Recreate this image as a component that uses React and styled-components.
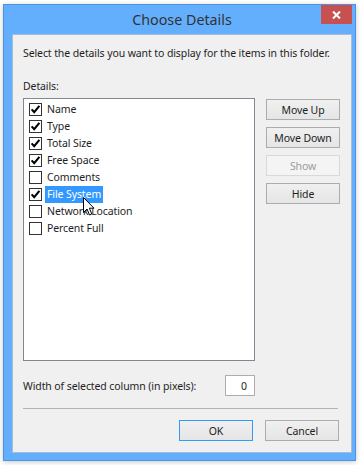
import React from "react";
import styled, { createGlobalStyle } from "styled-components";

const Global = createGlobalStyle`
  html, body { margin: 0; padding: 0; background: #ffffff; }
  body { font-family: "Noto Sans", "Open Sans", sans-serif; }
`;

const Page = styled.div`
  width: 364px;
  height: 465px;
  box-sizing: border-box;
  padding: 4px 0 0 3px;
  overflow: hidden;
`;

const Window = styled.div`
  width: 353px;
  height: 457px;
  box-sizing: border-box;
  border: 1px solid #4d94e0;
  background: #63affd;
  padding: 0 3px 7px 8px;
  display: flex;
  flex-direction: column;
  box-shadow: 0 1px 5px rgba(0, 0, 0, 0.22);
`;

const TitleBar = styled.div`
  position: relative;
  height: 29px;
  display: flex;
  align-items: center;
  justify-content: center;
  font-size: 14.3px;
  color: #333333;
`;

const CloseButton = styled.div`
  position: absolute;
  top: 0;
  right: 0;
  width: 31px;
  height: 19px;
  background: #c75050;
  display: flex;
  align-items: center;
  justify-content: center;
`;

const Client = styled.div`
  flex: 1;
  box-sizing: border-box;
  background: #f0f0f0;
  border: 1px solid #a7bdd6;
  padding: 11px 11px 11px 10px;
  display: flex;
  flex-direction: column;
  font-size: 10.5px;
  letter-spacing: -0.1px;
  color: #1e1e1e;
`;

const Text = styled.div`
  line-height: 15px;
  margin-top: ${(p) => p.$mt || 0}px;
`;

const MainRow = styled.div`
  display: flex;
  gap: 11px;
  margin-top: 4px;
`;

const ListBox = styled.div`
  position: relative;
  width: 233px;
  height: 263px;
  box-sizing: border-box;
  border: 1px solid #828790;
  background: #ffffff;
  padding: 2px 0 0 5px;
  display: flex;
  flex-direction: column;
`;

const Row = styled.div`
  height: 17px;
  display: flex;
  align-items: center;
`;

const Box = styled.div`
  width: 13px;
  height: 13px;
  box-sizing: border-box;
  border: 1px solid #333333;
  background: #ffffff;
  margin-right: 3px;
  display: flex;
  align-items: center;
  justify-content: center;
`;

const Label = styled.span`
  height: 17px;
  line-height: 17px;
  padding: 0 2px;
  background: ${(p) => (p.$selected ? "#3399ff" : "transparent")};
  color: ${(p) => (p.$selected ? "#ffffff" : "#1e1e1e")};
`;

const Cursor = styled.svg`
  position: absolute;
  left: 59px;
  top: 98px;
`;

const ButtonColumn = styled.div`
  display: flex;
  flex-direction: column;
  gap: 7px;
  padding-top: 1px;
`;

const Button = styled.div`
  width: 74px;
  height: 21px;
  box-sizing: border-box;
  border: 1px solid ${(p) => (p.$disabled ? "#d9d9d9" : p.$default ? "#3399ff" : "#acacac")};
  background: ${(p) => (p.$disabled ? "#f4f4f4" : "linear-gradient(#f0f0f0, #e5e5e5)")};
  color: ${(p) => (p.$disabled ? "#9b9b9b" : "#1e1e1e")};
  display: flex;
  align-items: center;
  justify-content: center;
`;

const WidthRow = styled.div`
  width: 233px;
  display: flex;
  align-items: center;
  justify-content: space-between;
  margin-top: 14px;
`;

const NumInput = styled.div`
  width: 30px;
  height: 21px;
  box-sizing: border-box;
  border: 1px solid #abadb3;
  background: #ffffff;
  display: flex;
  align-items: center;
  justify-content: flex-end;
  padding-right: 7px;
  margin-right: 1px;
`;

const Separator = styled.div`
  width: 315px;
  height: 1px;
  background: #b4b4b4;
  margin-top: 12px;
`;

const Footer = styled.div`
  display: flex;
  justify-content: flex-end;
  gap: 12px;
  margin-top: 11px;
  padding-right: 1px;
`;

const items = [
  ["Name", true],
  ["Type", true],
  ["Total Size", true],
  ["Free Space", true],
  ["Comments", false],
  ["File System", true, true],
  ["Network Location", false],
  ["Percent Full", false],
];

const Check = () => (
  <svg width="11" height="11" viewBox="0 0 11 11">
    <path d="M1.6 5.4 L4.2 8.2 L9.4 1.8" fill="none" stroke="#000" strokeWidth="2.1" strokeLinejoin="miter" />
  </svg>
);

export default function App() {
  return (
    <Page>
      <Global />
      <Window>
        <TitleBar>
          Choose Details
          <CloseButton>
            <svg width="9" height="8" viewBox="0 0 9 8">
              <path d="M1 0.5 L8 7.5 M8 0.5 L1 7.5" stroke="#fff" strokeWidth="2" />
            </svg>
          </CloseButton>
        </TitleBar>
        <Client>
          <Text>Select the details you want to display for the items in this folder.</Text>
          <Text $mt={18}>Details:</Text>
          <MainRow>
            <ListBox>
              {items.map(([name, checked, selected]) => (
                <Row key={name}>
                  <Box>{checked && <Check />}</Box>
                  <Label $selected={selected}>{name}</Label>
                </Row>
              ))}
              <Cursor width="13" height="20" viewBox="0 0 13 20">
                <path
                  d="M0.5 0.5 L0.5 15.5 L4 12 L6.5 18 L8.8 17 L6.4 11.2 L11 11.2 Z"
                  fill="#ffffff"
                  stroke="#000000"
                  strokeWidth="1"
                  strokeLinejoin="round"
                />
              </Cursor>
            </ListBox>
            <ButtonColumn>
              <Button>Move Up</Button>
              <Button>Move Down</Button>
              <Button $disabled>Show</Button>
              <Button>Hide</Button>
            </ButtonColumn>
          </MainRow>
          <WidthRow>
            <span>Width of selected column (in pixels):</span>
            <NumInput>0</NumInput>
          </WidthRow>
          <Separator />
          <Footer>
            <Button $default>OK</Button>
            <Button>Cancel</Button>
          </Footer>
        </Client>
      </Window>
    </Page>
  );
}
